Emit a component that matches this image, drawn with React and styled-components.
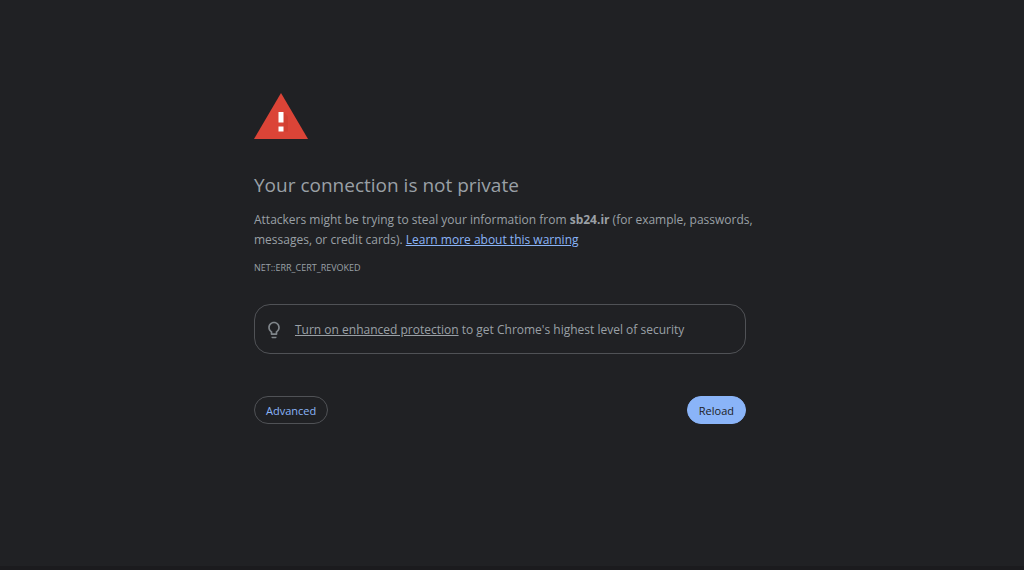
import styled, { createGlobalStyle } from "styled-components";

const App = () => {
  return (
    <>
      <GlobalStyle />
      <Page>
        <Content>
          <WarningIcon viewBox="0 0 54 46" aria-hidden="true">
            <path d="M27 0 54 46H0Z" fill="#db4437" />
            <path d="M29.5 19 34 23.500v15l-4.500 0z" fill="#c53929" opacity="0.4" />
            <path d="M24.5 19h5v10.500h-5zM24.500 33.500h5v5h-5z" fill="#fff" />
          </WarningIcon>
          <Title>Your connection is not private</Title>
          <Message>
            Attackers might be trying to steal your information from{" "}
            <strong>sb24.ir</strong> (for example, passwords,
            <br />
            messages, or credit cards).{" "}
            <MoreLink href="#">Learn more about this warning</MoreLink>
          </Message>
          <ErrorCode>NET::ERR_CERT_REVOKED</ErrorCode>
          <Promo>
            <BulbIcon viewBox="0 0 24 24" aria-hidden="true">
              <path d="M9 21c0 .5.4 1 1 1h4c.6 0 1-.5 1-1v-1H9v1zm3-19C8.100 2 5 5.100 5 9c0 2.400 1.200 4.500 3 5.700V17c0 .5.4 1 1 1h6c.6 0 1-.5 1-1v-2.300c1.800-1.300 3-3.400 3-5.700 0-3.900-3.100-7-7-7zm2.900 11.100l-.9.6V16h-4v-2.300l-.9-.6C7.800 12.200 7 10.600 7 9c0-2.800 2.200-5 5-5s5 2.200 5 5c0 1.600-.8 3.200-2.100 4.100z" />
            </BulbIcon>
            <p>
              <PromoLink href="#">Turn on enhanced protection</PromoLink> to get
              Chrome's highest level of security
            </p>
          </Promo>
          <Actions>
            <Button>Advanced</Button>
            <Button $primary>Reload</Button>
          </Actions>
        </Content>
      </Page>
    </>
  );
};

export default App;

const GlobalStyle = createGlobalStyle`
  * {
    box-sizing: border-box;
  }

  body {
    margin: 0;
    background: #202124;
    color: #9aa0a6;
    font-family: "Segoe UI", "Open Sans", "Noto Sans", sans-serif;
    font-size: 12px;
  }

  p {
    margin: 0;
  }
`;

const Page = styled.main`
  min-height: 100vh;
  padding: 93px 48px 24px 24px;
  border-bottom: 4px solid #1b1b1e;
`;

// Text column
const Content = styled.div`
  max-width: 492px;
  margin: 0 auto;
`;

const WarningIcon = styled.svg`
  display: block;
  width: 54px;
  height: 46px;
`;

const Title = styled.h1`
  margin: 33px 0 12px;
  font-size: 19px;
  font-weight: 400;
  line-height: 26px;
`;

const Message = styled.p`
  line-height: 20px;

  @media (min-width: 600px) {
    white-space: nowrap;
  }
`;

const MoreLink = styled.a`
  color: #8ab4f8;
`;

const ErrorCode = styled.p`
  margin-top: 10px;
  font-size: 9px;
  line-height: 16px;
`;

const Promo = styled.div`
  display: flex;
  align-items: center;
  gap: 11px;
  margin-top: 28px;
  padding: 15px 9px 13px;
  border: 1px solid #505256;
  border-radius: 16px;
  line-height: 20px;
`;

const BulbIcon = styled.svg`
  flex: none;
  width: 20px;
  height: 20px;
  fill: #80868b;
`;

const PromoLink = styled.a`
  color: inherit;
`;

const Actions = styled.div`
  display: flex;
  justify-content: space-between;
  margin-top: 42px;
`;

const Button = styled.button`
  height: 28px;
  padding: 0 11px;
  border: 1px solid ${({ $primary }) => ($primary ? "#8ab4f8" : "#505256")};
  border-radius: 14px;
  background: ${({ $primary }) => ($primary ? "#8ab4f8" : "transparent")};
  color: ${({ $primary }) => ($primary ? "#202124" : "#8ab4f8")};
  font-family: inherit;
  font-size: 11px;
  cursor: pointer;
`;
